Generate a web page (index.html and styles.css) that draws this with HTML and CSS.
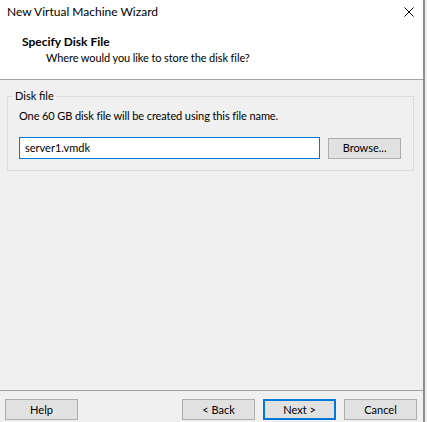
FILE: index.html
```html
<!DOCTYPE html>
<html>
<head>
<meta charset="utf-8">
<link rel="stylesheet" href="styles.css">
</head>
<body>
<div class="window">
  <div class="titlebar">
    <span class="title">New Virtual Machine Wizard</span>
    <svg class="close" width="10" height="10" viewBox="0 0 10 10"><path d="M0.5 0.5 L9.5 9.5 M9.5 0.5 L0.5 9.5" stroke="#000" stroke-width="1" fill="none"/></svg>
  </div>
  <div class="header">
    <div class="heading">Specify Disk File</div>
    <div class="subheading">Where would you like to store the disk file?</div>
  </div>
  <div class="content">
    <fieldset class="group">
      <legend class="legend">Disk file</legend>
      <div class="info">One 60 GB disk file will be created using this file name.</div>
      <div class="filerow">
        <div class="textbox">server1.vmdk</div>
        <div class="button browse">Browse...</div>
      </div>
    </fieldset>
  </div>
  <div class="footer">
    <div class="button help">Help</div>
    <div class="navgroup">
      <div class="button">&lt; Back</div>
      <div class="button default">Next &gt;</div>
      <div class="button">Cancel</div>
    </div>
  </div>
</div>
</body>
</html>
```
FILE: styles.css
```css
html {
  background: #f0f0f0;
}
body {
  margin: 0;
  width: 427px;
  height: 422px;
  overflow: hidden;
  font-family: Lato, "Noto Sans", sans-serif;
  font-size: 11px;
  line-height: 16px;
  color: #000;
}
.window {
  width: 423px;
  height: 422px;
  border-right: 2px solid #8c8c8c;
  background: #f0f0f0;
  display: flex;
  flex-direction: column;
}
.titlebar {
  height: 24px;
  background: #fff;
  display: flex;
  align-items: center;
  justify-content: space-between;
  padding: 0 9px 0 7px;
  font-size: 12px;
}
.close {
  display: block;
}
.header {
  background: #fff;
  padding: 10px 0 13px 22px;
  border-bottom: 1px solid #a0a0a0;
}
.heading {
  font-weight: bold;
  font-size: 12px;
}
.subheading {
  margin-left: 24px;
  letter-spacing: -0.1px;
}
.content {
  flex: 1;
  padding: 8px 9px 0 7px;
}
.group {
  margin: 0;
  border: 1px solid #dcdcdc;
  padding: 2px 12px 11px 11px;
  min-width: 0;
}
.legend {
  margin-left: -6px;
  padding: 0 2px;
}
.info {
  margin-top: 2px;
  letter-spacing: -0.1px;
}
.filerow {
  display: flex;
  align-items: center;
  margin-top: 13px;
  gap: 8px;
}
.textbox {
  width: 302px;
  height: 22px;
  box-sizing: border-box;
  border: 1px solid #0078d7;
  background: #fff;
  padding: 2px 5px;
}
.button {
  width: 73px;
  height: 21px;
  box-sizing: border-box;
  background: #e1e1e1;
  border: 1px solid #adadad;
  display: flex;
  align-items: center;
  justify-content: center;
}
.button.default {
  border: 2px solid #0078d7;
}
.footer {
  border-top: 1px solid #a0a0a0;
  padding: 8px 6px 2px 5px;
  display: flex;
  justify-content: space-between;
}
.navgroup {
  display: flex;
  gap: 8px;
}
```
